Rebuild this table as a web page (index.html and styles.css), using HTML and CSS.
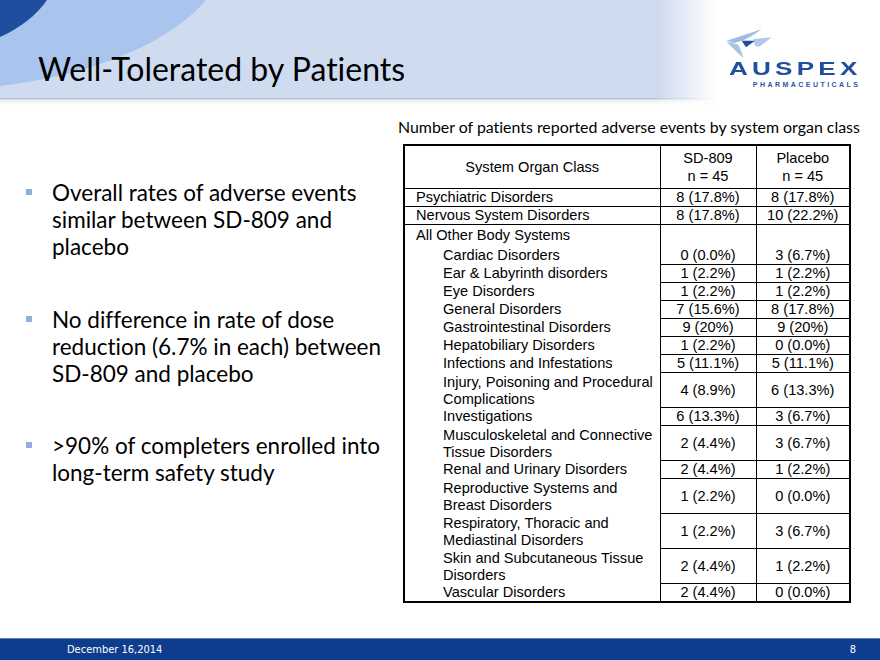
FILE: index.html
```html
<!DOCTYPE html>
<html lang="en">
<head>
<meta charset="utf-8">
<title>Well-Tolerated by Patients</title>
<link rel="stylesheet" href="styles.css">
</head>
<body>
<div class="slide">
  <header class="top">
    <svg class="arcs" width="260" height="98" viewBox="0 0 260 98">
      <path d="M0 0H206C172 40 100 74 0 86Z" fill="#a9c5ee"/>
      <path d="M0 0H47C37 15 20 28 0 37Z" fill="#1f4e9f"/>
    </svg>
    <h1 class="title">Well-Tolerated by Patients</h1>
    <div class="logo">
      <svg class="mark" width="50" height="32" viewBox="0 0 50 32">
        <path d="M1.5 12.7L36.7 1.3L25 9L17 12.7L9 15Z" fill="#9dbbe4"/>
        <path d="M28.3 11L46.7 9.3L34.3 18.7L30 18Z" fill="#b3c9ea"/>
        <path d="M16.7 12.7H30L21 19.3Z" fill="#1f4fa0"/>
        <path d="M1.5 13.5L13 16.5C15.5 20 17 25 18.3 30C13 25 7 19.5 1.5 13.5Z" fill="#a9c2e6"/>
      </svg>
      <div class="brand"><span>AUSPEX</span></div>
      <div class="pharma">PHARMACEUTICALS</div>
    </div>
  </header>

  <main class="content">
    <ul class="points">
      <li>Overall rates of adverse events similar between SD-809 and placebo</li>
      <li>No difference in rate of dose reduction (6.7% in each) between SD-809 and placebo</li>
      <li>&gt;90% of completers enrolled into long-term safety study</li>
    </ul>

    <section class="data">
      <p class="caption">Number of patients reported adverse events by system organ class</p>
      <table class="ae">
        <colgroup><col class="c1"><col class="c2"><col class="c3"></colgroup>
        <thead>
          <tr><th>System Organ Class</th><th class="v">SD-809<br>n = 45</th><th class="v">Placebo<br>n = 45</th></tr>
        </thead>
        <tbody>
          <tr class="major"><td>Psychiatric Disorders</td><td class="v">8 (17.8%)</td><td class="v">8 (17.8%)</td></tr>
          <tr class="major"><td>Nervous System Disorders</td><td class="v">8 (17.8%)</td><td class="v">10 (22.2%)</td></tr>
          <tr class="group"><td>All Other Body Systems</td><td class="v empty"></td><td class="v empty"></td></tr>
          <tr class="first"><td class="indent">Cardiac Disorders</td><td class="v">0 (0.0%)</td><td class="v">3 (6.7%)</td></tr>
          <tr><td class="indent">Ear &amp; Labyrinth disorders</td><td class="v">1 (2.2%)</td><td class="v">1 (2.2%)</td></tr>
          <tr><td class="indent">Eye Disorders</td><td class="v">1 (2.2%)</td><td class="v">1 (2.2%)</td></tr>
          <tr><td class="indent">General Disorders</td><td class="v">7 (15.6%)</td><td class="v">8 (17.8%)</td></tr>
          <tr><td class="indent">Gastrointestinal Disorders</td><td class="v">9 (20%)</td><td class="v">9 (20%)</td></tr>
          <tr><td class="indent">Hepatobiliary Disorders</td><td class="v">1 (2.2%)</td><td class="v">0 (0.0%)</td></tr>
          <tr><td class="indent">Infections and Infestations</td><td class="v">5 (11.1%)</td><td class="v">5 (11.1%)</td></tr>
          <tr class="two"><td class="indent">Injury, Poisoning and Procedural<br>Complications</td><td class="v">4 (8.9%)</td><td class="v">6 (13.3%)</td></tr>
          <tr><td class="indent">Investigations</td><td class="v">6 (13.3%)</td><td class="v">3 (6.7%)</td></tr>
          <tr class="two"><td class="indent">Musculoskeletal and Connective<br>Tissue Disorders</td><td class="v">2 (4.4%)</td><td class="v">3 (6.7%)</td></tr>
          <tr><td class="indent">Renal and Urinary Disorders</td><td class="v">2 (4.4%)</td><td class="v">1 (2.2%)</td></tr>
          <tr class="two"><td class="indent">Reproductive Systems and<br>Breast Disorders</td><td class="v">1 (2.2%)</td><td class="v">0 (0.0%)</td></tr>
          <tr class="two"><td class="indent">Respiratory, Thoracic and<br>Mediastinal Disorders</td><td class="v">1 (2.2%)</td><td class="v">3 (6.7%)</td></tr>
          <tr class="two"><td class="indent">Skin and Subcutaneous Tissue<br>Disorders</td><td class="v">2 (4.4%)</td><td class="v">1 (2.2%)</td></tr>
          <tr><td class="indent">Vascular Disorders</td><td class="v">2 (4.4%)</td><td class="v">0 (0.0%)</td></tr>
        </tbody>
      </table>
    </section>
  </main>

  <footer class="foot">
    <span>December 16,2014</span>
    <span>8</span>
  </footer>
</div>
</body>
</html>
```

FILE: styles.css
```css
* { box-sizing: border-box; margin: 0; padding: 0; }

html, body {
  width: 880px;
  height: 660px;
  overflow: hidden;
  background: #fff;
}

.slide {
  width: 880px;
  height: 660px;
  display: flex;
  flex-direction: column;
  font-family: Lato, "Open Sans", sans-serif;
  font-variant-ligatures: none;
  color: #000;
}

/* ---------- header ---------- */
.top {
  position: relative;
  flex: none;
  height: 98px;
  display: flex;
  justify-content: space-between;
  align-items: flex-start;
  background: linear-gradient(to right, #cfdcf0 0, #cfdcf0 660px, #ffffff 716px);
}

.top::after {
  content: "";
  position: absolute;
  left: 0;
  right: 0;
  top: 98px;
  height: 7px;
  background: linear-gradient(to bottom, #a3afc3 0, rgba(220, 224, 232, 0.6) 2px, rgba(255, 255, 255, 0) 7px);
  -webkit-mask-image: linear-gradient(to right, #000 650px, transparent 720px);
  mask-image: linear-gradient(to right, #000 650px, transparent 720px);
}

.arcs {
  position: absolute;
  left: 0;
  top: 0;
}

.title {
  position: relative;
  margin: 53px 0 0 38px;
  font-family: Lato, "Open Sans", sans-serif;
  font-weight: 400;
  font-size: 32px;
  line-height: 32px;
  color: #000;
  white-space: nowrap;
}

.logo {
  width: 133px;
  margin: 28px 22px 0 0;
  display: flex;
  flex-direction: column;
}

.mark {
  display: block;
  width: 50px;
  height: 32px;
}

.brand {
  height: 18px;
  padding-left: 4px;
  font-family: "Liberation Sans", Arial, sans-serif;
  font-weight: 700;
  font-size: 18px;
  line-height: 18px;
  color: #1f4fa0;
  white-space: nowrap;
}

.brand span {
  display: inline-block;
  letter-spacing: 2.9px;
  transform: scaleX(1.45);
  transform-origin: left center;
}

.pharma {
  margin-top: 3px;
  margin-right: -2.4px;
  text-align: right;
  font-family: "Liberation Sans", Arial, sans-serif;
  font-weight: 700;
  font-size: 7px;
  line-height: 8px;
  letter-spacing: 2.45px;
  color: #2a57a5;
  white-space: nowrap;
}

/* ---------- content ---------- */
.content {
  flex: 1;
  display: flex;
}

.points {
  list-style: none;
  width: 398px;
  flex: none;
  padding: 81px 0 0 26px;
}

.points li {
  display: flex;
  font-size: 22.5px;
  line-height: 27px;
  margin-bottom: 46px;
  padding-right: 8px;
}

.points li + li + li {
  margin-top: -1px;
}

.points li::before {
  content: "";
  flex: none;
  width: 6px;
  height: 6px;
  margin: 10px 20px 0 0;
  background: #8fb0dd;
}

.data {
  flex: 1;
  padding-top: 20px;
  display: flex;
  flex-direction: column;
}

.caption {
  font-size: 15.9px;
  line-height: 18px;
  white-space: nowrap;
  margin-bottom: 8px;
}

/* ---------- table ---------- */
.ae {
  width: 446px;
  margin-left: 5px;
  border-collapse: collapse;
  border: 2px solid #000;
  font-family: "Liberation Sans", Arial, sans-serif;
  font-size: 14.6px;
  line-height: 17px;
  table-layout: fixed;
}

.ae .c1 { width: 256px; }
.ae .c2 { width: 96px; }
.ae .c3 { width: 94px; }

.ae th {
  height: 43px;
  padding: 2px 0;
  font-weight: 400;
  line-height: 18px;
  text-align: center;
  vertical-align: middle;
  border-bottom: 1px solid #000;
}

.ae td {
  padding: 0 2px 0 11px;
  text-align: left;
  vertical-align: middle;
  white-space: nowrap;
}

.ae td.indent {
  padding-left: 38px;
}

.ae .v {
  text-align: center;
  padding: 0;
  border-left: 1px solid #000;
}

.ae td.v {
  border-bottom: 1px solid #000;
}

.ae td.v.empty {
  border-bottom: none;
}

.ae tr.group td {
  height: 21px;
  padding-top: 2px;
  padding-bottom: 1px;
}

.ae tr.first td {
  height: 19px;
  padding-top: 2px;
}

.ae tr.two td {
  height: 35px;
  padding-top: 1px;
}

.ae tr.major td {
  border-bottom: 1px solid #000;
}

/* ---------- footer ---------- */
.foot {
  flex: none;
  height: 22px;
  display: flex;
  justify-content: space-between;
  align-items: center;
  padding: 0 24px 0 67px;
  background: #0e3d8e;
  border-top: 1px solid #5d7fc0;
  font-family: "DejaVu Sans Condensed", "DejaVu Sans", sans-serif;
  font-size: 11px;
  color: #fff;
}
```
